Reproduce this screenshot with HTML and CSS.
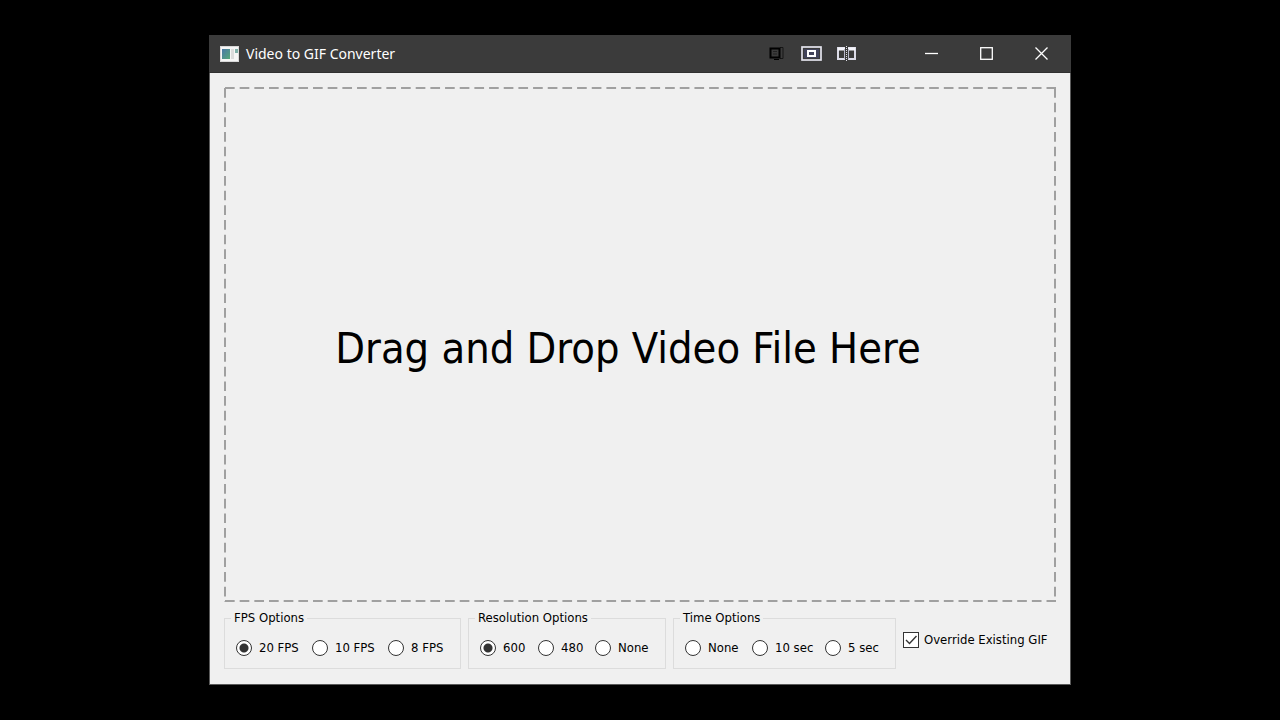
FILE: index.html
```html
<!DOCTYPE html>
<html lang="en">
<head>
<meta charset="utf-8">
<title>Video to GIF Converter</title>
<link rel="stylesheet" href="styles.css">
</head>
<body>
<main class="window">
  <header class="titlebar">
    <svg class="app-icon" width="19" height="16" viewBox="0 0 19 16" aria-hidden="true">
      <defs><linearGradient id="screen" x1="0" y1="0" x2="1" y2="1"><stop offset="0" stop-color="#4a78a8"/><stop offset="1" stop-color="#55a878"/></linearGradient></defs>
      <rect x="0" y="0" width="19" height="16" fill="#d8d8d8"/>
      <rect x="1" y="1" width="17" height="14" fill="#f6f6f6"/>
      <rect x="2" y="3" width="8" height="10" fill="url(#screen)"/>
      <rect x="11" y="3" width="3" height="10" fill="#dcdcdc"/>
      <rect x="15" y="3" width="3" height="4" fill="#7fb0a8"/>
    </svg>
    <h1 class="title">Video to GIF Converter</h1>
    <div class="tools">
      <button class="tool" type="button" aria-label="Stack window">
        <svg width="15" height="15" viewBox="0 0 15 15" fill="none" stroke="#000"><path d="M11 1.500H14V12.500H11" stroke="#161616"/><rect x="1.500" y="2.500" width="9" height="9" stroke-width="2"/><path d="M4 5.500H8M4 8H8" stroke="#222"/><path d="M5 13.500H10"/></svg>
      </button>
      <button class="tool" type="button" aria-label="Center window">
        <svg width="21" height="15" viewBox="0 0 21 15" fill="none"><rect x="1" y="1" width="19" height="13" stroke="#e4e4ee" stroke-width="1.700"/><rect x="3" y="3" width="15" height="9" fill="#41435a"/><rect x="7" y="5" width="7" height="5" stroke="#fff" stroke-width="2"/></svg>
      </button>
      <button class="tool" type="button" aria-label="Split window">
        <svg width="19" height="15" viewBox="0 0 19 15" fill="none"><path d="M8 2H1V13H8M11 2H18V13H11" stroke="#dcdce8" stroke-width="2"/><path d="M1 3H8M11 3H18" stroke="#f4f4fa" stroke-width="3"/><path d="M7.500 3V13M11.500 3V13" stroke="#b9b9ca"/><path d="M9.500 0V15" stroke="#e0e0e8" stroke-dasharray="1 1"/></svg>
      </button>
    </div>
    <div class="controls">
      <button class="control" type="button" aria-label="Minimize"><svg width="13" height="13" viewBox="0 0 13 13"><path d="M0 6.500H13" stroke="#fff" stroke-width="1.300"/></svg></button>
      <button class="control" type="button" aria-label="Maximize"><svg width="13" height="13" viewBox="0 0 13 13" fill="none"><rect x=".7" y=".7" width="11.600" height="11.600" stroke="#fff" stroke-width="1.300"/></svg></button>
      <button class="control" type="button" aria-label="Close"><svg width="13" height="13" viewBox="0 0 13 13"><path d="M.5 .5L12.500 12.500M12.500 .5L.5 12.500" stroke="#fff" stroke-width="1.300"/></svg></button>
    </div>
  </header>
  <div class="content">
    <section class="drop-zone">
      <svg class="outline" aria-hidden="true">
        <g stroke="#a0a0a0" stroke-width="2" stroke-dasharray="9.670 5">
          <line x1="1" y1="1" x2="100%" y2="1"/>
          <line x1="1" y1="1" x2="1" y2="100%"/>
          <svg x="100%" overflow="visible"><line x1="-1" y1="1" x2="-1" y2="100%"/></svg>
          <svg y="100%" overflow="visible"><line x1="1" y1="-1" x2="100%" y2="-1"/></svg>
        </g>
      </svg>
      <p class="prompt">Drag and Drop Video File Here</p>
    </section>
    <form class="options">
      <fieldset class="group fps">
        <legend>FPS Options</legend>
        <label><input type="radio" name="fps" checked>20 FPS</label>
        <label><input type="radio" name="fps">10 FPS</label>
        <label><input type="radio" name="fps">8 FPS</label>
      </fieldset>
      <fieldset class="group resolution">
        <legend>Resolution Options</legend>
        <label><input type="radio" name="resolution" checked>600</label>
        <label><input type="radio" name="resolution">480</label>
        <label><input type="radio" name="resolution">None</label>
      </fieldset>
      <fieldset class="group time">
        <legend>Time Options</legend>
        <label><input type="radio" name="time">None</label>
        <label><input type="radio" name="time">10 sec</label>
        <label><input type="radio" name="time">5 sec</label>
      </fieldset>
      <label class="override">
        <span class="check"><input type="checkbox" checked><svg width="16" height="16" viewBox="0 0 16 16" aria-hidden="true"><path d="M3 8L6.500 11.500L13.500 4" fill="none" stroke="#333" stroke-width="1.400"/></svg></span>Override Existing GIF
      </label>
    </form>
  </div>
</main>
</body>
</html>
```

FILE: styles.css
```css
* {
  box-sizing: border-box;
}

body {
  margin: 0;
  min-height: 100vh;
  padding: 35px 209px;
  display: flex;
  background: #000;
  color: #000;
  font-family: "DejaVu Sans Condensed", "DejaVu Sans", sans-serif;
  font-stretch: condensed;
  font-size: 13px;
  line-height: 16px;
}

.window {
  flex: 1;
  display: flex;
  flex-direction: column;
  border: 1px solid #5a5a5a;
  border-top: 0;
  background: #f0f0f0;
}

.titlebar {
  display: flex;
  align-items: center;
  height: 38px;
  margin: 0 -1px;
  padding: 0 2px 0 11px;
  background: #3b3b3b;
  border-bottom: 1px solid #303030;
  color: #fff;
}

.title {
  margin: 0 auto 0 7px;
  font-family: "Noto Sans", sans-serif;
  font-size: 14px;
  font-stretch: normal;
  font-weight: 400;
  line-height: 20px;
}

.tools,
.controls {
  display: flex;
  align-self: stretch;
}

.tools {
  margin-right: 40px;
}

.tool,
.control {
  display: flex;
  align-items: center;
  justify-content: center;
  padding: 0;
  border: 0;
  background: none;
}

.tool {
  width: 35px;
}

.control {
  width: 55px;
}

.content {
  flex: 1;
  display: flex;
  flex-direction: column;
  gap: 8px;
  padding: 14px 14px 15px;
}

.drop-zone {
  position: relative;
  flex: 1;
  display: flex;
  align-items: center;
  justify-content: center;
  padding: 6px 24px 0 0;
}

.outline {
  position: absolute;
  inset: 0;
  width: 100%;
  height: 100%;
}

.prompt {
  margin: 0;
  font-size: 43px;
  line-height: 56px;
}

.options {
  display: flex;
  align-items: center;
  gap: 7px;
}

.group {
  display: grid;
  align-items: center;
  min-width: 0;
  height: 59px;
  margin: 0;
  padding: 6px 0 4px 11px;
  border: 1px solid #dcdcdc;
}

.group legend {
  margin-left: -5px;
  padding: 0 3px;
}

.fps {
  flex: 0 1 237px;
  grid-template-columns: 76px 76px auto;
}

.resolution {
  flex: 0 1 198px;
  grid-template-columns: 58px 57px auto;
}

.time {
  flex: 0 1 223px;
  grid-template-columns: 67px 73px auto;
}

label {
  display: flex;
  align-items: center;
  gap: 7px;
  white-space: nowrap;
}

.override {
  gap: 5px;
}

input {
  appearance: none;
  flex: none;
  width: 16px;
  height: 16px;
  margin: 0;
  border: 1px solid #333;
  background: #fff;
}

input[type="radio"] {
  border-radius: 50%;
}

input[type="radio"]:checked {
  background: radial-gradient(circle, #333 4px, #fff 5px);
}

.check {
  position: relative;
  display: flex;
}

.check svg {
  position: absolute;
  inset: 0;
  pointer-events: none;
}

.check input:not(:checked) + svg {
  display: none;
}
```
